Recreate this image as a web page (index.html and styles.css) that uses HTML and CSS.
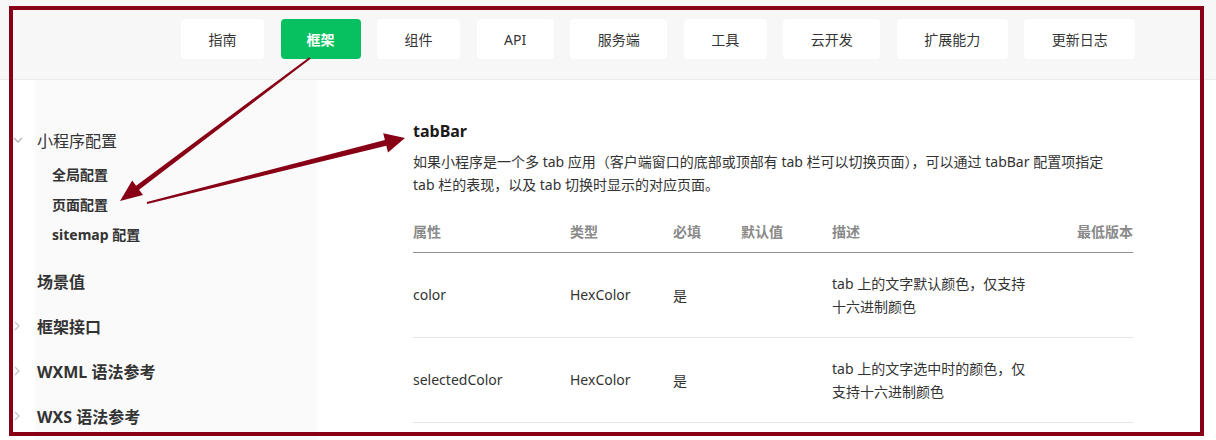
FILE: index.html
```html
<!DOCTYPE html>
<html lang="zh-CN">
<head>
<meta charset="utf-8">
<title>tabBar</title>
<link rel="stylesheet" href="styles.css">
</head>
<body>
<div class="page">
  <header class="topbar">
    <nav class="nav">
      <a class="nav-btn">指南</a>
      <a class="nav-btn active">框架</a>
      <a class="nav-btn">组件</a>
      <a class="nav-btn">API</a>
      <a class="nav-btn">服务端</a>
      <a class="nav-btn">工具</a>
      <a class="nav-btn">云开发</a>
      <a class="nav-btn">扩展能力</a>
      <a class="nav-btn">更新日志</a>
    </nav>
  </header>

  <div class="main">
    <aside class="sidebar">
      <div class="group-title">
        <span class="chev"><svg width="10" height="8" viewBox="0 0 10 8"><polyline points="1,2 5,6 9,2" fill="none" stroke="#b4b4b4" stroke-width="1.3"/></svg></span>
        <span class="title-text">小程序配置</span>
      </div>
      <ul class="sub-list">
        <li class="sub-item">全局配置</li>
        <li class="sub-item">页面配置</li>
        <li class="sub-item">sitemap 配置</li>
      </ul>
      <div class="top-item">
        <span class="chev"></span>
        <span>场景值</span>
      </div>
      <div class="top-item">
        <span class="chev"><svg width="8" height="10" viewBox="0 0 8 10"><polyline points="2,1 6,5 2,9" fill="none" stroke="#c4c4c4" stroke-width="1.3"/></svg></span>
        <span>框架接口</span>
      </div>
      <div class="top-item">
        <span class="chev"><svg width="8" height="10" viewBox="0 0 8 10"><polyline points="2,1 6,5 2,9" fill="none" stroke="#c4c4c4" stroke-width="1.3"/></svg></span>
        <span>WXML 语法参考</span>
      </div>
      <div class="top-item">
        <span class="chev"><svg width="8" height="10" viewBox="0 0 8 10"><polyline points="2,1 6,5 2,9" fill="none" stroke="#c4c4c4" stroke-width="1.3"/></svg></span>
        <span>WXS 语法参考</span>
      </div>
    </aside>

    <section class="content">
      <h2 class="heading">tabBar</h2>
      <p class="desc">如果小程序是一个多 tab 应用（客户端窗口的底部或顶部有 tab 栏可以切换页面），可以通过 tabBar 配置项指定 tab 栏的表现，以及 tab 切换时显示的对应页面。</p>
      <table class="props">
        <colgroup>
          <col class="c1"><col class="c2"><col class="c3"><col class="c4"><col class="c5"><col class="c6">
        </colgroup>
        <thead>
          <tr>
            <th>属性</th><th>类型</th><th>必填</th><th>默认值</th><th>描述</th><th class="right">最低版本</th>
          </tr>
        </thead>
        <tbody>
          <tr>
            <td>color</td><td>HexColor</td><td>是</td><td></td><td class="d">tab 上的文字默认颜色，仅支持十六进制颜色</td><td></td>
          </tr>
          <tr>
            <td>selectedColor</td><td>HexColor</td><td>是</td><td></td><td class="d">tab 上的文字选中时的颜色，仅支持十六进制颜色</td><td></td>
          </tr>
        </tbody>
      </table>
    </section>
  </div>

  <div class="frame"></div>
  <svg class="arrows" width="1216" height="440" viewBox="0 0 1216 440">
    <polygon fill="#880015" points="310.6,58.8 139.1,189.8 143,195 120,201 132.2,180.6 136.1,185.8 309.4,57.2"/>
    <polygon fill="#880015" points="147.2,204 386.3,145.8 388,152.6 405,138 383.2,133.2 384.9,140 146.8,202"/>
  </svg>
</div>
</body>
</html>
```

FILE: styles.css
```css
* {
  box-sizing: border-box;
}

html, body {
  margin: 0;
  padding: 0;
  background: #ffffff;
}

body {
  font-family: "Noto Sans", "Noto Sans CJK SC", sans-serif;
  color: #333333;
}

.page {
  position: relative;
  width: 1216px;
  height: 440px;
  overflow: hidden;
}

.topbar {
  height: 80px;
  background: #f7f7f7;
  border-bottom: 1px solid #ececec;
}

.nav {
  display: flex;
  gap: 16.5px;
  padding: 19px 0 0 181px;
}

.nav-btn {
  display: flex;
  align-items: center;
  justify-content: center;
  height: 40px;
  padding: 0 27.5px;
  background: #ffffff;
  border-radius: 4px;
  font-size: 14px;
  color: #353535;
}

.nav-btn.active {
  background: #07c160;
  color: #ffffff;
  font-weight: 600;
  padding: 0 26px;
}

.main {
  display: flex;
  height: 360px;
}

.sidebar {
  width: 317px;
  flex: none;
  background: linear-gradient(to right, #ffffff 35px, #fafafa 35px);
  padding-top: 48px;
  color: #333333;
}

.group-title {
  display: flex;
  align-items: center;
  height: 24px;
  font-size: 16px;
}

.chev {
  width: 37px;
  flex: none;
  display: flex;
  align-items: center;
  padding-left: 13px;
}

.chev svg {
  display: block;
}

.sub-list {
  list-style: none;
  margin: 8px 0 0 0;
  padding: 0 0 0 52px;
}

.sub-item {
  height: 30px;
  line-height: 30px;
  font-size: 14px;
  font-weight: 700;
  color: #333333;
}

.top-item {
  display: flex;
  align-items: center;
  height: 45px;
  font-size: 16px;
  font-weight: 700;
  color: #333333;
}

.sidebar .group-title + .sub-list + .top-item {
  margin-top: 8px;
}

.content {
  padding: 39px 0 0 96px;
  width: 816px;
}

.heading {
  margin: 0;
  font-size: 16px;
  line-height: 24px;
  font-weight: 700;
  color: #1a1a1a;
}

.desc {
  margin: 7px 0 0 0;
  max-width: 712px;
  font-size: 14px;
  line-height: 23px;
  color: #333333;
}

.props {
  margin-top: 14px;
  width: 720px;
  table-layout: fixed;
  border-collapse: collapse;
  font-size: 14px;
}

.c1 { width: 157px; }
.c2 { width: 103px; }
.c3 { width: 68px; }
.c4 { width: 91px; }
.c5 { width: 210px; }
.c6 { width: 91px; }

.props th {
  height: 42px;
  padding: 0;
  text-align: left;
  font-weight: 700;
  color: #8a8a8a;
  border-bottom: 1px solid #8e8e8e;
}

.props th.right {
  text-align: right;
}

.props td {
  height: 85px;
  padding: 0;
  color: #333333;
  border-bottom: 1px solid #e5e5e5;
  vertical-align: middle;
}

.props td.d {
  line-height: 23px;
  padding-right: 14px;
}

.frame {
  position: absolute;
  left: 9px;
  top: 6px;
  width: 1195px;
  height: 430px;
  border: 4px solid #880015;
  pointer-events: none;
}

.arrows {
  position: absolute;
  left: 0;
  top: 0;
  pointer-events: none;
}
```
